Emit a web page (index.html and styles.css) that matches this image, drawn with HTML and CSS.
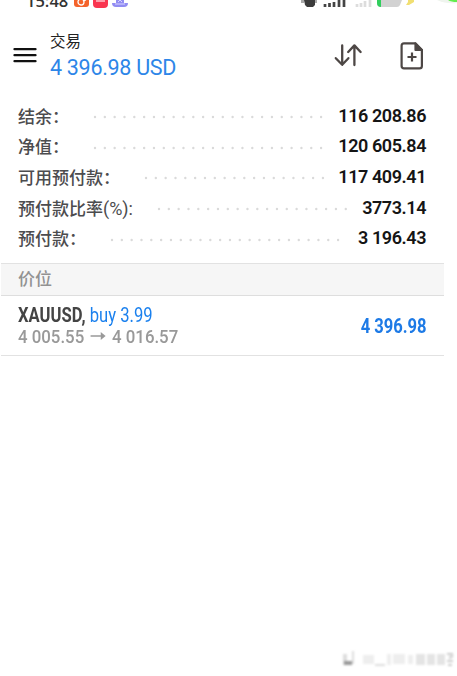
FILE: index.html
```
<!DOCTYPE html>
<html lang="zh-CN">
<head>
  <meta charset="UTF-8">
  <title>交易</title>
  <link rel="stylesheet" href="styles.css">
</head>
<body>
<div class="page">
  <div class="status">
    <span class="time">15:48</span>
    <svg class="apps" width="56" height="10" viewBox="0 0 56 10">
      <path d="M0 0h15v4q0 3-3 3H3q-3 0-3-3z" fill="#f4632b"/>
      <circle cx="7" cy="2" r="3" fill="none" stroke="#fff" stroke-width="1.3"/>
      <path d="M9 1l3-1" stroke="#fff" stroke-width="1.3"/>
      <path d="M19 0h15v4q0 4-4 4h-7q-4 0-4-4z" fill="#f93550"/>
      <path d="M22 1h9" stroke="#ffc3cb" stroke-width="1.5"/>
      <path d="M42 0h8v3h4q0 4-4 4h-8q-4 0-4-4h4z" fill="#918cf2"/>
      <path d="M44 2l2-2 2 2M41 4h10" fill="none" stroke="#d8d5ff"/>
    </svg>
    <svg class="signals" width="157" height="10" viewBox="0 0 157 10">
      <path d="M1 0h3v3H1zM14 0h3v3h-3z" fill="#aaa"/>
      <path d="M4 0h11v5l-2 2H7L5 5z" fill="#3c3c3c"/>
      <path d="M25 4v3M29.5 3v4M34 2v5M39 0v7M44 0v7" stroke="#444" stroke-width="2.7"/>
      <path d="M57 4v3M61 3v4M65 1v6M70 0v7" stroke="#ddd" stroke-width="2.7"/>
      <path d="M77 0h25l-2 5q-1 2-3 2H81q-4 0-4-4z" fill="#d2d2d2"/>
      <path d="M77 0h4v7q-4 0-4-4z" fill="#31cf5d"/>
      <path d="M108 0h6v2l-5 3h-3l2-3z" fill="#f1df72"/>
      <path d="M137 0h20v3q-11 1-20-3z" fill="#eff4ee"/>
      <path d="M148 0h9v2q-6 0-9-2z" fill="#62ed4d"/>
    </svg>
  </div>

  <div class="header">
    <svg class="menu" width="24" height="18" viewBox="0 0 24 18">
      <path d="M1.5 2.2h21M1.5 8.2h21M1.5 14.2h21" stroke="#111" stroke-width="2.3" stroke-linecap="round"/>
    </svg>
    <div class="title">
      <div class="name">交易</div>
      <div class="profit">4 396.98 USD</div>
    </div>
    <svg class="sort" width="28" height="26" viewBox="0 0 28 26" fill="none" stroke="#4d4745" stroke-width="2.3" stroke-linecap="round" stroke-linejoin="round">
      <path d="M8.2 2.5v19M1.8 15.2l6.4 6.6 6.2-6.6"/>
      <path d="M20.4 22V2.6M14.2 9l6.2-6.6L26.6 9"/>
    </svg>
    <svg class="new" width="24" height="28" viewBox="0 0 24 28" fill="none" stroke="#4d4745" stroke-width="2.2" stroke-linejoin="round">
      <path d="M4 1.4h11.5l6.400 6.500v16q0 2.400-2.400 2.400H4q-2.400 0-2.400-2.400V3.800Q1.600 1.400 4 1.400z"/>
      <path d="M15.500 1.400v6.500h6.400z" fill="#4d4745"/>
      <path d="M12 10.500v9M7.500 15h9"/>
    </svg>
  </div>

  <div class="account">
    <div class="row"><span class="label">结余：</span><svg class="dots"><line x1="2" y1="2" x2="100%" y2="2"/></svg><span class="value">116 208.86</span></div>
    <div class="row"><span class="label">净值：</span><svg class="dots"><line x1="2" y1="2" x2="100%" y2="2"/></svg><span class="value">120 605.84</span></div>
    <div class="row"><span class="label">可用预付款：</span><svg class="dots"><line x1="2" y1="2" x2="100%" y2="2"/></svg><span class="value">117 409.41</span></div>
    <div class="row"><span class="label">预付款比率<i>(%):</i></span><svg class="dots"><line x1="2" y1="2" x2="100%" y2="2"/></svg><span class="value">3773.14</span></div>
    <div class="row"><span class="label">预付款：</span><svg class="dots"><line x1="2" y1="2" x2="100%" y2="2"/></svg><span class="value">3 196.43</span></div>
  </div>

  <div class="section">价位</div>

  <div class="position">
    <div class="deal">
      <div class="symbol"><b>XAUUSD,</b> <span class="buy">buy 3.99</span></div>
      <div class="prices">4 005.55 <svg width="22" height="12" viewBox="0 0 22 12"><path d="M2 5h15" stroke="#999" stroke-width="1.7"/><path d="M13.500 1l5.500 4-5.500 4z" fill="#999"/></svg> 4 016.57</div>
    </div>
    <div class="result">4 396.98</div>
  </div>

  <svg class="mark" width="118" height="24" viewBox="0 0 118 24">
    <g class="soft">
      <path d="M4 6h4v11H4zM13 3h2v13h-2z" fill="#ddd"/>
      <path d="M5 13h8v4H5z" fill="#999"/>
      <path d="M24 7h11v9H24zM48 6h4v11h-4zM54 6h12v10H54zM69 7h5v9h-5z" fill="#eee"/>
      <path d="M36 16h10v2H36z" fill="#ddd"/>
      <path d="M77 6h9v11h-9zM88 6h8v11h-8zM98 6h8v11h-8z" fill="#e4e4e4"/>
      <path d="M108 6h6M110 10l4-2M108 13h6M109 17h4" stroke="#ccc" stroke-width="2"/>
    </g>
  </svg>
</div>
</body>
</html>
```
FILE: styles.css
```
* {
  margin: 0;
  padding: 0;
  box-sizing: border-box;
}

body {
  background: #fff;
  font-family: Roboto, "Noto Sans CJK SC", sans-serif;
}

svg {
  display: block;
  flex: none;
}

.page {
  display: flex;
  flex-direction: column;
  width: 457px;
  height: 676px;
  overflow: hidden;
}

.status {
  display: flex;
  height: 10px;
  padding-left: 26px;
}

.time {
  width: 48px;
  margin-top: -8px;
  font-family: "Open Sans", sans-serif;
  font-size: 16.5px;
  font-weight: 600;
  line-height: 17px;
  color: #333;
}

.signals {
  margin-left: auto;
}

.header {
  display: flex;
  height: 93px;
  padding: 22px 33px 0 13px;
}

.menu {
  margin-top: 15px;
}

.title {
  flex: 1;
  padding-left: 13px;
}

.name {
  font-size: 15.5px;
  line-height: 21px;
  color: #222;
}

.profit {
  font-size: 21.5px;
  line-height: 29px;
  letter-spacing: -0.3px;
  color: #2d86e8;
}

.sort {
  margin-top: 11px;
}

.new {
  margin: 10px 0 0 38px;
}

.account {
  display: flex;
  flex-direction: column;
  width: 444px;
  height: 160px;
  padding: 0 18px;
  margin-top: -3px;
  margin-bottom: 3px;
}

.row {
  display: flex;
  align-items: center;
  height: 30.6px;
}

.label {
  font-size: 17px;
  font-weight: 500;
  color: #4c4c4e;
  white-space: nowrap;
}

.label i {
  font-style: normal;
  font-size: 18px;
  font-weight: 400;
}

.dots {
  flex: 1;
  width: 0;
  min-width: 0;
  height: 4px;
  margin: 4px 12px 0 24px;
}

.dots line {
  stroke: #dadada;
  stroke-width: 2.4;
  stroke-linecap: round;
  stroke-dasharray: 0 9.83;
}

.value {
  font-size: 18px;
  font-weight: 600;
  letter-spacing: -0.42px;
  color: #151515;
  white-space: nowrap;
}

.section {
  width: 443px;
  height: 33px;
  margin-left: 1px;
  padding-left: 17px;
  border-top: 1px solid #e2e2e2;
  border-bottom: 1px solid #dedede;
  background: #f6f6f6;
  font-size: 17px;
  font-weight: 500;
  line-height: 30px;
  color: #929292;
}

.position {
  display: flex;
  justify-content: space-between;
  width: 443px;
  height: 60px;
  margin-left: 1px;
  padding: 8px 17px 0;
  border-bottom: 1px solid #e2e2e2;
  white-space: nowrap;
}

.symbol {
  font-size: 20px;
  line-height: 22px;
  color: #444;
  transform: scaleX(0.83);
  transform-origin: left;
}

.buy {
  color: #1a80ee;
}

.prices {
  font-size: 19px;
  font-weight: 500;
  line-height: 22px;
  color: #999;
  transform: scaleX(0.885);
  transform-origin: left;
}

.prices svg {
  display: inline-block;
}

.result {
  font-size: 19.5px;
  font-weight: 700;
  line-height: 46px;
  color: #1d7ae6;
  transform: scaleX(0.85);
  transform-origin: right;
}

.mark {
  margin: auto 0 4px 339px;
}

.soft {
  filter: blur(1.2px);
}
```
